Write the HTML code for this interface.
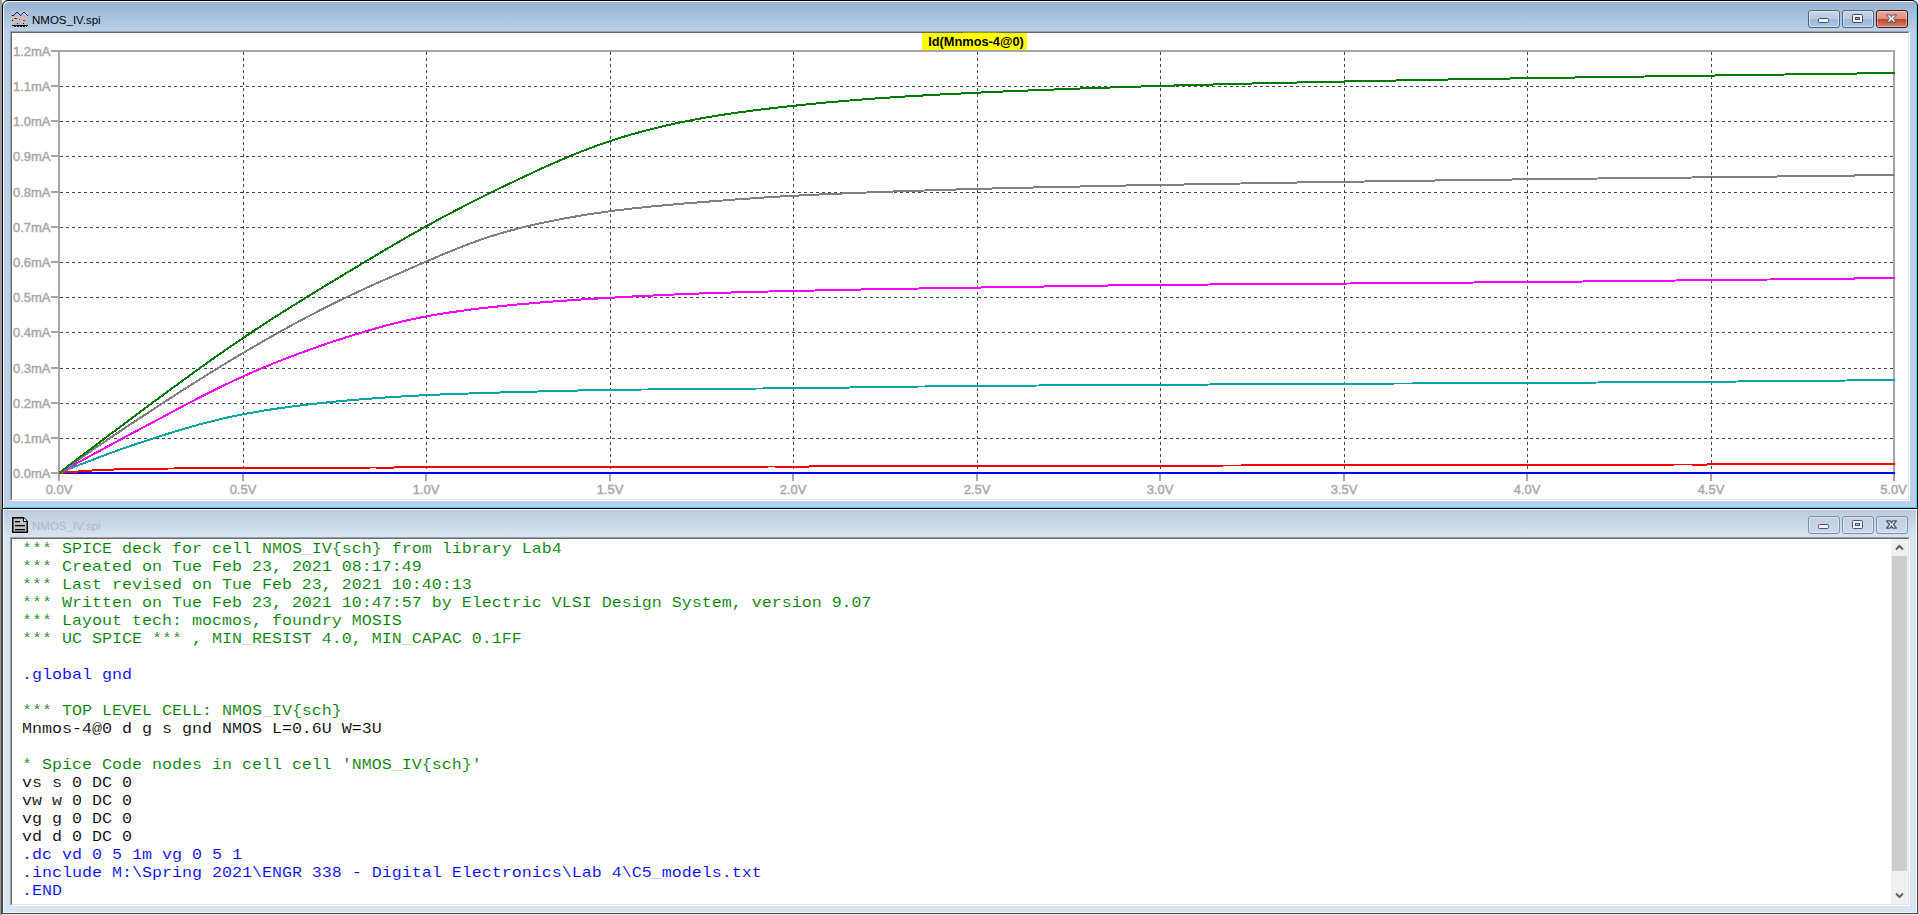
<!DOCTYPE html>
<html lang="en">
<head>
<meta charset="utf-8">
<title>NMOS_IV.spi</title>
<style>
html,body{margin:0;padding:0}
body{width:1918px;height:915px;overflow:hidden;position:relative;background:#f0f0f0;font-family:"Liberation Sans",sans-serif}
.abs{position:absolute}
#edgeL{left:0;top:0;width:2px;height:915px;background:#9a9a9a}
#edgeL2{left:1px;top:509px;width:2px;height:405px;background:#4a4a4a}
/* window 1 (active) */
#w1{left:2px;top:0;width:1914px;height:507px;border:1px solid #000;border-radius:6px 6px 0 0;
 background:linear-gradient(#9ab5d3 0,#9fb9d6 8px,#b9d1ea 30px,#b9d1ea 100%);
 box-shadow:inset 1px 1px 0 #f4f8fc,inset -1px -1px 0 #3fd5f5}
#c1{left:10px;top:31px;width:1898px;height:468px;border:1px solid;border-color:#a0a0a0 #fff #fff #a0a0a0}
#c1 i,#c2 i{display:block;box-sizing:border-box;width:100%;height:100%;background:#fff;border:1px solid;border-color:#696969 #e3e3e3 #e3e3e3 #696969}
/* window 2 (inactive) */
#w2{left:2px;top:509px;width:1914px;height:404px;border:1px solid #474747;border-top:0;
 background:linear-gradient(#bccbdc 0,#c6d4e4 12px,#d7e4f2 28px,#d7e4f2 100%);
 box-shadow:inset 1px 1px 0 #eef4fb,inset -1px -1px 0 #f2f7fc}
#c2{left:10px;top:537px;width:1898px;height:367px;border:1px solid;border-color:#a0a0a0 #fff #fff #a0a0a0}
.title{font-size:11.5px;line-height:16px;white-space:nowrap;left:32px}
#t1{top:12px;color:#000}
#t2{top:518px;color:#b1b4be}
/* caption buttons */
.btn{width:30px;height:16px;border:1px solid #56617a;border-radius:3px;box-shadow:inset 0 0 0 1px rgba(255,255,255,.45);
 background:linear-gradient(#c3d4e9 0,#b7cbe4 47%,#9db7d6 50%,#aac4e2 100%)}
.btn.close{border-color:#431422;background:linear-gradient(#e9ab9d 0,#dd8f7d 47%,#bd4424 50%,#d3836c 100%);box-shadow:inset 0 0 0 1px rgba(255,230,225,.5)}
.btn.in{border-color:#7f8dab;background:linear-gradient(#c1cfe2 0,#ccd9ea 100%);box-shadow:inset 0 0 0 1px rgba(235,242,250,.6)}
.btn svg{position:absolute;left:0;top:0}
/* plot */
#plot{left:0;top:0}
#plot .g{stroke:#484848;stroke-width:1;stroke-dasharray:3 3;shape-rendering:crispEdges}
#plot .c{fill:none;stroke-width:2;stroke-linejoin:round;shape-rendering:crispEdges}
#plot .t{font-family:"Liberation Sans",sans-serif;font-size:13px;fill:#a6a6a6;stroke:#a6a6a6;stroke-width:.4px}
#lab{left:922px;top:33px;width:105px;height:17px;background:#ffff00;color:#000;font-weight:bold;font-size:12.8px;line-height:18px;text-align:center;white-space:nowrap;padding-left:3px;box-sizing:border-box}
#labtop{left:963px;top:32px;width:36px;height:1px;background:#9a9a00}
/* code */
#code{left:22px;top:540px;font-family:"Liberation Mono",monospace;font-size:16.67px;line-height:18px;color:#000}
#code .l{height:18px;white-space:pre;transform:scaleY(.9);transform-origin:0 13.5px;-webkit-text-stroke:.12px #fff}
#code .g{color:#008000}
#code .b{color:#0000ff}
#code .k{color:#000}
/* scrollbar */
#sb{left:1891px;top:539px;width:17px;height:365px;background:#f0f0f0}
#thumb{left:1892px;top:556px;width:15px;height:315px;background:#cdcdcd}
</style>
</head>
<body>
<div class="abs" id="edgeL"></div>
<div class="abs" id="w1"></div>
<div class="abs" id="c1"><i></i></div>
<div class="abs" id="w2"></div>
<div class="abs" id="edgeL2"></div>
<div class="abs" id="c2"><i></i></div>

<!-- window 1 title -->
<svg class="abs" style="left:12px;top:11px" width="16" height="16" viewBox="0 0 16 16" shape-rendering="crispEdges">
<rect width="16" height="16" fill="#c0c0c0"/>
<path d="M1,4h1v1h-1zM2,3h1v1h-1zM3,2h1v1h-1zM4,1h1v1h-1zM5,1h1v1h-1zM6,2h1v1h-1zM7,3h1v1h-1zM8,4h1v1h-1zM9,3h1v1h-1zM10,2h1v1h-1zM11,1h1v1h-1zM12,1h1v1h-1zM13,2h1v1h-1zM14,3h1v1h-1zM15,4h1v1h-1z" fill="#0000ff"/>
<rect x="0" y="4" width="1" height="1" fill="#000"/><rect x="0" y="9" width="1" height="1" fill="#000"/>
<rect x="2" y="7" width="3" height="1" fill="#ff0000"/><rect x="7" y="8" width="1" height="1" fill="#ff0000"/><rect x="11" y="9" width="2" height="1" fill="#ff0000"/>
<rect x="5" y="12" width="1" height="1" fill="#0000c0"/><rect x="11" y="12" width="1" height="1" fill="#0000c0"/>
<rect x="0" y="14" width="16" height="1" fill="#000"/>
<rect x="2" y="15" width="2" height="1" fill="#000"/><rect x="5" y="15" width="2" height="1" fill="#000"/><rect x="8" y="15" width="2" height="1" fill="#000"/><rect x="11" y="15" width="2" height="1" fill="#000"/><rect x="14" y="15" width="1" height="1" fill="#000"/>
</svg>
<div class="abs title" id="t1">NMOS_IV.spi</div>
<div class="abs btn" style="left:1808px;top:10px"><svg width="30" height="16"><rect x="9.5" y="7.5" width="10" height="4" rx="1" fill="#f2f2f2" stroke="#3c4a66"/></svg></div>
<div class="abs btn" style="left:1842px;top:10px"><svg width="30" height="16"><rect x="9.5" y="3.5" width="10" height="8" rx="1" fill="#f6f6f6" stroke="#3c4a66"/><rect x="12.5" y="6.5" width="4" height="2" fill="#8eaace" stroke="#3c4a66"/></svg></div>
<div class="abs btn close" style="left:1876px;top:10px"><svg width="30" height="16"><path d="M9.50,3.90L13.40,3.90L14.50,6.20L15.60,3.90L19.50,3.90L16.45,7.50L19.50,11.10L15.60,11.10L14.50,8.80L13.40,11.10L9.50,11.10L12.55,7.50Z" fill="#fbfbfb" stroke="#4a4f68" stroke-width="1" stroke-linejoin="round"/></svg></div>

<!-- plot -->
<svg class="abs" id="plot" width="1918" height="509" viewBox="0 0 1918 509">
<line x1="60" y1="438.5" x2="1893" y2="438.5" class="g"/>
<line x1="60" y1="403.5" x2="1893" y2="403.5" class="g"/>
<line x1="60" y1="368.5" x2="1893" y2="368.5" class="g"/>
<line x1="60" y1="332.5" x2="1893" y2="332.5" class="g"/>
<line x1="60" y1="297.5" x2="1893" y2="297.5" class="g"/>
<line x1="60" y1="262.5" x2="1893" y2="262.5" class="g"/>
<line x1="60" y1="227.5" x2="1893" y2="227.5" class="g"/>
<line x1="60" y1="192.5" x2="1893" y2="192.5" class="g"/>
<line x1="60" y1="156.5" x2="1893" y2="156.5" class="g"/>
<line x1="60" y1="121.5" x2="1893" y2="121.5" class="g"/>
<line x1="60" y1="86.5" x2="1893" y2="86.5" class="g"/>
<line x1="243.5" y1="52" x2="243.5" y2="473" class="g"/>
<line x1="426.5" y1="52" x2="426.5" y2="473" class="g"/>
<line x1="610.5" y1="52" x2="610.5" y2="473" class="g"/>
<line x1="793.5" y1="52" x2="793.5" y2="473" class="g"/>
<line x1="977.5" y1="52" x2="977.5" y2="473" class="g"/>
<line x1="1160.5" y1="52" x2="1160.5" y2="473" class="g"/>
<line x1="1344.5" y1="52" x2="1344.5" y2="473" class="g"/>
<line x1="1527.5" y1="52" x2="1527.5" y2="473" class="g"/>
<line x1="1711.5" y1="52" x2="1711.5" y2="473" class="g"/>
<rect x="51" y="50" width="1844" height="2" fill="#a6a6a6"/>
<rect x="58" y="50" width="2" height="431" fill="#a6a6a6"/>
<rect x="1893" y="50" width="2" height="431" fill="#a6a6a6"/>
<rect x="51" y="472" width="1844" height="2" fill="#a6a6a6"/>
<rect x="51" y="472" width="8" height="2" fill="#a6a6a6"/>
<rect x="51" y="437" width="8" height="2" fill="#a6a6a6"/>
<rect x="51" y="402" width="8" height="2" fill="#a6a6a6"/>
<rect x="51" y="367" width="8" height="2" fill="#a6a6a6"/>
<rect x="51" y="331" width="8" height="2" fill="#a6a6a6"/>
<rect x="51" y="296" width="8" height="2" fill="#a6a6a6"/>
<rect x="51" y="261" width="8" height="2" fill="#a6a6a6"/>
<rect x="51" y="226" width="8" height="2" fill="#a6a6a6"/>
<rect x="51" y="191" width="8" height="2" fill="#a6a6a6"/>
<rect x="51" y="155" width="8" height="2" fill="#a6a6a6"/>
<rect x="51" y="120" width="8" height="2" fill="#a6a6a6"/>
<rect x="51" y="85" width="8" height="2" fill="#a6a6a6"/>
<rect x="51" y="50" width="8" height="2" fill="#a6a6a6"/>
<rect x="58" y="473" width="2" height="8" fill="#a6a6a6"/>
<rect x="242" y="473" width="2" height="8" fill="#a6a6a6"/>
<rect x="425" y="473" width="2" height="8" fill="#a6a6a6"/>
<rect x="609" y="473" width="2" height="8" fill="#a6a6a6"/>
<rect x="792" y="473" width="2" height="8" fill="#a6a6a6"/>
<rect x="976" y="473" width="2" height="8" fill="#a6a6a6"/>
<rect x="1159" y="473" width="2" height="8" fill="#a6a6a6"/>
<rect x="1343" y="473" width="2" height="8" fill="#a6a6a6"/>
<rect x="1526" y="473" width="2" height="8" fill="#a6a6a6"/>
<rect x="1710" y="473" width="2" height="8" fill="#a6a6a6"/>
<rect x="1893" y="473" width="2" height="8" fill="#a6a6a6"/>
<path d="M59.0,473.0L1895.0,473.0" stroke="#0000ff" class="c"/>
<path d="M59.0,473.0L64.8,472.5L70.5,472.1L76.3,471.6L82.1,471.2L87.9,470.8L93.6,470.4L99.4,470.1L105.2,469.8L110.9,469.6L116.7,469.4L122.5,469.3L128.2,469.2L134.0,469.0L139.8,468.9L145.6,468.8L151.3,468.7L157.1,468.7L162.9,468.6L168.6,468.5L174.4,468.5L180.2,468.4L185.9,468.4L191.7,468.3L197.5,468.3L203.3,468.3L209.0,468.2L214.8,468.2L220.6,468.2L226.3,468.1L232.1,468.1L237.9,468.1L243.7,468.0L249.4,468.0L255.2,468.0L261.0,467.9L266.7,467.9L272.5,467.9L278.3,467.9L284.0,467.8L289.8,467.8L295.6,467.8L301.4,467.8L307.1,467.7L312.9,467.7L318.7,467.7L324.4,467.7L330.2,467.7L336.0,467.6L341.8,467.6L347.5,467.6L353.3,467.6L359.1,467.6L364.8,467.6L370.6,467.5L376.4,467.5L382.1,467.5L387.9,467.5L393.7,467.5L399.5,467.4L405.2,467.4L411.0,467.4L416.8,467.4L422.5,467.4L428.3,467.3L434.1,467.3L439.8,467.3L445.6,467.3L451.4,467.3L457.2,467.3L462.9,467.2L468.7,467.2L474.5,467.2L480.2,467.2L486.0,467.2L491.8,467.2L497.6,467.2L503.3,467.1L509.1,467.1L514.9,467.1L520.6,467.1L526.4,467.1L532.2,467.1L537.9,467.1L543.7,467.0L549.5,467.0L555.3,467.0L561.0,467.0L566.8,467.0L572.6,467.0L578.3,467.0L584.1,466.9L589.9,466.9L595.7,466.9L601.4,466.9L607.2,466.9L613.0,466.9L618.7,466.9L624.5,466.9L630.3,466.8L636.0,466.8L641.8,466.8L647.6,466.8L653.4,466.8L659.1,466.8L664.9,466.8L670.7,466.8L676.4,466.7L682.2,466.7L688.0,466.7L693.7,466.7L699.5,466.7L705.3,466.7L711.1,466.7L716.8,466.7L722.6,466.6L728.4,466.6L734.1,466.6L739.9,466.6L745.7,466.6L751.5,466.6L757.2,466.6L763.0,466.6L768.8,466.5L774.5,466.5L780.3,466.5L786.1,466.5L791.8,466.5L797.6,466.5L803.4,466.5L809.2,466.5L814.9,466.4L820.7,466.4L826.5,466.4L832.2,466.4L838.0,466.4L843.8,466.4L849.6,466.4L855.3,466.3L861.1,466.3L866.9,466.3L872.6,466.3L878.4,466.3L884.2,466.3L889.9,466.3L895.7,466.3L901.5,466.2L907.3,466.2L913.0,466.2L918.8,466.2L924.6,466.2L930.3,466.2L936.1,466.2L941.9,466.1L947.6,466.1L953.4,466.1L959.2,466.1L965.0,466.1L970.7,466.1L976.5,466.1L992.1,466.0L1007.6,466.0L1023.2,466.0L1038.7,465.9L1054.3,465.9L1069.8,465.9L1085.4,465.8L1100.9,465.8L1116.5,465.8L1132.0,465.7L1147.6,465.7L1163.1,465.7L1178.7,465.6L1194.2,465.6L1209.8,465.6L1225.3,465.5L1240.9,465.5L1256.4,465.4L1272.0,465.4L1287.5,465.4L1303.1,465.3L1318.6,465.3L1334.2,465.3L1349.7,465.2L1365.3,465.2L1380.8,465.2L1396.4,465.1L1411.9,465.1L1427.5,465.1L1443.0,465.0L1458.6,465.0L1474.1,465.0L1489.7,464.9L1505.2,464.9L1520.8,464.9L1536.3,464.8L1551.9,464.8L1567.4,464.8L1583.0,464.7L1598.5,464.7L1614.1,464.7L1629.6,464.6L1645.2,464.6L1660.7,464.6L1676.3,464.5L1691.8,464.5L1707.4,464.5L1722.9,464.4L1738.5,464.4L1754.0,464.4L1769.6,464.3L1785.1,464.3L1800.7,464.3L1816.2,464.2L1831.8,464.2L1847.3,464.2L1862.9,464.2L1878.4,464.1L1894.0,464.1L1895.0,464.1" stroke="#ff0000" class="c"/>
<path d="M59.0,473.0L64.8,470.7L70.5,468.4L76.3,466.1L82.1,463.8L87.9,461.6L93.6,459.4L99.4,457.2L105.2,455.0L110.9,452.9L116.7,450.8L122.5,448.7L128.2,446.7L134.0,444.7L139.8,442.8L145.6,440.9L151.3,439.0L157.1,437.1L162.9,435.3L168.6,433.5L174.4,431.7L180.2,430.0L185.9,428.3L191.7,426.7L197.5,425.0L203.3,423.5L209.0,422.0L214.8,420.5L220.6,419.1L226.3,417.8L232.1,416.5L237.9,415.3L243.7,414.2L249.4,413.1L255.2,412.1L261.0,411.1L266.7,410.1L272.5,409.2L278.3,408.4L284.0,407.6L289.8,406.8L295.6,406.0L301.4,405.3L307.1,404.6L312.9,403.9L318.7,403.3L324.4,402.7L330.2,402.1L336.0,401.5L341.8,401.0L347.5,400.5L353.3,400.0L359.1,399.5L364.8,399.0L370.6,398.6L376.4,398.1L382.1,397.7L387.9,397.3L393.7,397.0L399.5,396.6L405.2,396.3L411.0,395.9L416.8,395.6L422.5,395.3L428.3,395.0L434.1,394.8L439.8,394.5L445.6,394.3L451.4,394.1L457.2,393.9L462.9,393.7L468.7,393.5L474.5,393.3L480.2,393.1L486.0,392.9L491.8,392.7L497.6,392.6L503.3,392.4L509.1,392.3L514.9,392.1L520.6,391.9L526.4,391.8L532.2,391.6L537.9,391.5L543.7,391.3L549.5,391.2L555.3,391.0L561.0,390.9L566.8,390.8L572.6,390.6L578.3,390.5L584.1,390.4L589.9,390.3L595.7,390.2L601.4,390.1L607.2,390.0L613.0,389.9L618.7,389.8L624.5,389.7L630.3,389.7L636.0,389.6L641.8,389.5L647.6,389.5L653.4,389.4L659.1,389.4L664.9,389.3L670.7,389.2L676.4,389.2L682.2,389.1L688.0,389.1L693.7,389.0L699.5,389.0L705.3,388.9L711.1,388.9L716.8,388.9L722.6,388.8L728.4,388.8L734.1,388.7L739.9,388.7L745.7,388.6L751.5,388.6L757.2,388.5L763.0,388.5L768.8,388.4L774.5,388.4L780.3,388.3L786.1,388.2L791.8,388.2L797.6,388.1L803.4,388.1L809.2,388.0L814.9,387.9L820.7,387.9L826.5,387.8L832.2,387.7L838.0,387.6L843.8,387.6L849.6,387.5L855.3,387.4L861.1,387.3L866.9,387.2L872.6,387.2L878.4,387.1L884.2,387.0L889.9,386.9L895.7,386.8L901.5,386.8L907.3,386.7L913.0,386.6L918.8,386.5L924.6,386.5L930.3,386.4L936.1,386.3L941.9,386.3L947.6,386.2L953.4,386.1L959.2,386.1L965.0,386.0L970.7,386.0L976.5,385.9L992.1,385.8L1007.6,385.7L1023.2,385.6L1038.7,385.5L1054.3,385.4L1069.8,385.3L1085.4,385.2L1100.9,385.1L1116.5,385.0L1132.0,385.0L1147.6,384.9L1163.1,384.8L1178.7,384.7L1194.2,384.6L1209.8,384.5L1225.3,384.4L1240.9,384.3L1256.4,384.3L1272.0,384.2L1287.5,384.1L1303.1,384.0L1318.6,383.9L1334.2,383.9L1349.7,383.8L1365.3,383.7L1380.8,383.6L1396.4,383.5L1411.9,383.5L1427.5,383.4L1443.0,383.3L1458.6,383.2L1474.1,383.2L1489.7,383.1L1505.2,383.0L1520.8,382.9L1536.3,382.8L1551.9,382.8L1567.4,382.7L1583.0,382.6L1598.5,382.5L1614.1,382.4L1629.6,382.3L1645.2,382.2L1660.7,382.1L1676.3,381.9L1691.8,381.8L1707.4,381.7L1722.9,381.6L1738.5,381.5L1754.0,381.3L1769.6,381.2L1785.1,381.1L1800.7,380.9L1816.2,380.8L1831.8,380.6L1847.3,380.5L1862.9,380.3L1878.4,380.2L1894.0,380.0L1895.0,380.0" stroke="#00a6a6" class="c"/>
<path d="M59.0,473.0L64.8,469.8L70.5,466.7L76.3,463.5L82.1,460.4L87.9,457.2L93.6,454.1L99.4,451.0L105.2,447.8L110.9,444.7L116.7,441.6L122.5,438.5L128.2,435.4L134.0,432.3L139.8,429.2L145.6,426.1L151.3,423.1L157.1,420.0L162.9,416.9L168.6,413.8L174.4,410.7L180.2,407.7L185.9,404.6L191.7,401.6L197.5,398.6L203.3,395.6L209.0,392.7L214.8,389.8L220.6,387.0L226.3,384.2L232.1,381.5L237.9,378.8L243.7,376.2L249.4,373.6L255.2,371.1L261.0,368.6L266.7,366.2L272.5,363.8L278.3,361.5L284.0,359.2L289.8,357.0L295.6,354.8L301.4,352.7L307.1,350.6L312.9,348.5L318.7,346.5L324.4,344.5L330.2,342.5L336.0,340.6L341.8,338.8L347.5,336.9L353.3,335.1L359.1,333.3L364.8,331.6L370.6,329.9L376.4,328.2L382.1,326.6L387.9,325.1L393.7,323.6L399.5,322.2L405.2,320.8L411.0,319.5L416.8,318.3L422.5,317.1L428.3,316.0L434.1,315.0L439.8,314.0L445.6,313.1L451.4,312.2L457.2,311.4L462.9,310.6L468.7,309.8L474.5,309.1L480.2,308.4L486.0,307.7L491.8,307.1L497.6,306.5L503.3,305.9L509.1,305.3L514.9,304.7L520.6,304.2L526.4,303.7L532.2,303.2L537.9,302.7L543.7,302.2L549.5,301.8L555.3,301.3L561.0,300.9L566.8,300.5L572.6,300.1L578.3,299.7L584.1,299.3L589.9,299.0L595.7,298.6L601.4,298.3L607.2,297.9L613.0,297.6L618.7,297.3L624.5,296.9L630.3,296.6L636.0,296.3L641.8,296.0L647.6,295.7L653.4,295.5L659.1,295.2L664.9,294.9L670.7,294.7L676.4,294.4L682.2,294.2L688.0,294.0L693.7,293.8L699.5,293.5L705.3,293.3L711.1,293.1L716.8,293.0L722.6,292.8L728.4,292.6L734.1,292.4L739.9,292.3L745.7,292.1L751.5,291.9L757.2,291.8L763.0,291.6L768.8,291.5L774.5,291.4L780.3,291.2L786.1,291.1L791.8,291.0L797.6,290.8L803.4,290.7L809.2,290.6L814.9,290.5L820.7,290.3L826.5,290.2L832.2,290.1L838.0,290.0L843.8,289.9L849.6,289.8L855.3,289.7L861.1,289.5L866.9,289.4L872.6,289.3L878.4,289.2L884.2,289.1L889.9,289.0L895.7,288.9L901.5,288.8L907.3,288.7L913.0,288.6L918.8,288.5L924.6,288.4L930.3,288.4L936.1,288.3L941.9,288.2L947.6,288.1L953.4,288.0L959.2,287.9L965.0,287.8L970.7,287.7L976.5,287.6L992.1,287.3L1007.6,287.1L1023.2,286.8L1038.7,286.6L1054.3,286.3L1069.8,286.1L1085.4,285.9L1100.9,285.6L1116.5,285.4L1132.0,285.2L1147.6,285.1L1163.1,284.9L1178.7,284.7L1194.2,284.6L1209.8,284.5L1225.3,284.3L1240.9,284.2L1256.4,284.1L1272.0,284.0L1287.5,283.9L1303.1,283.8L1318.6,283.7L1334.2,283.6L1349.7,283.5L1365.3,283.3L1380.8,283.2L1396.4,283.1L1411.9,283.0L1427.5,282.9L1443.0,282.8L1458.6,282.7L1474.1,282.5L1489.7,282.4L1505.2,282.3L1520.8,282.1L1536.3,282.0L1551.9,281.9L1567.4,281.7L1583.0,281.5L1598.5,281.4L1614.1,281.2L1629.6,281.0L1645.2,280.8L1660.7,280.7L1676.3,280.5L1691.8,280.3L1707.4,280.1L1722.9,280.0L1738.5,279.8L1754.0,279.6L1769.6,279.5L1785.1,279.3L1800.7,279.1L1816.2,278.9L1831.8,278.8L1847.3,278.6L1862.9,278.4L1878.4,278.3L1894.0,278.1L1895.0,278.1" stroke="#ff00ff" class="c"/>
<path d="M59.0,473.0L64.8,469.0L70.5,465.0L76.3,461.0L82.1,457.1L87.9,453.1L93.6,449.2L99.4,445.2L105.2,441.3L110.9,437.4L116.7,433.5L122.5,429.7L128.2,425.8L134.0,422.0L139.8,418.1L145.6,414.3L151.3,410.6L157.1,406.8L162.9,403.0L168.6,399.3L174.4,395.5L180.2,391.8L185.9,388.1L191.7,384.5L197.5,380.8L203.3,377.2L209.0,373.6L214.8,370.0L220.6,366.5L226.3,363.0L232.1,359.5L237.9,356.0L243.7,352.6L249.4,349.2L255.2,345.9L261.0,342.5L266.7,339.2L272.5,336.0L278.3,332.7L284.0,329.5L289.8,326.3L295.6,323.2L301.4,320.1L307.1,317.0L312.9,314.0L318.7,311.0L324.4,308.1L330.2,305.2L336.0,302.3L341.8,299.5L347.5,296.7L353.3,294.0L359.1,291.3L364.8,288.6L370.6,286.0L376.4,283.4L382.1,280.8L387.9,278.3L393.7,275.7L399.5,273.2L405.2,270.7L411.0,268.2L416.8,265.6L422.5,263.1L428.3,260.6L434.1,258.2L439.8,255.7L445.6,253.3L451.4,250.9L457.2,248.5L462.9,246.3L468.7,244.0L474.5,241.9L480.2,239.9L486.0,237.9L491.8,236.0L497.6,234.3L503.3,232.6L509.1,230.9L514.9,229.4L520.6,227.9L526.4,226.5L532.2,225.1L537.9,223.8L543.7,222.6L549.5,221.4L555.3,220.2L561.0,219.1L566.8,218.0L572.6,217.0L578.3,216.0L584.1,215.0L589.9,214.1L595.7,213.2L601.4,212.4L607.2,211.6L613.0,210.8L618.7,210.1L624.5,209.4L630.3,208.7L636.0,208.1L641.8,207.5L647.6,206.9L653.4,206.3L659.1,205.8L664.9,205.3L670.7,204.7L676.4,204.2L682.2,203.7L688.0,203.2L693.7,202.8L699.5,202.3L705.3,201.8L711.1,201.4L716.8,200.9L722.6,200.5L728.4,200.0L734.1,199.6L739.9,199.2L745.7,198.8L751.5,198.4L757.2,198.0L763.0,197.6L768.8,197.2L774.5,196.9L780.3,196.5L786.1,196.2L791.8,195.9L797.6,195.6L803.4,195.3L809.2,195.0L814.9,194.7L820.7,194.4L826.5,194.2L832.2,193.9L838.0,193.7L843.8,193.4L849.6,193.2L855.3,192.9L861.1,192.7L866.9,192.5L872.6,192.3L878.4,192.1L884.2,191.8L889.9,191.6L895.7,191.4L901.5,191.2L907.3,191.0L913.0,190.8L918.8,190.6L924.6,190.5L930.3,190.3L936.1,190.1L941.9,189.9L947.6,189.8L953.4,189.6L959.2,189.4L965.0,189.2L970.7,189.1L976.5,188.9L992.1,188.5L1007.6,188.1L1023.2,187.7L1038.7,187.4L1054.3,187.0L1069.8,186.7L1085.4,186.4L1100.9,186.0L1116.5,185.7L1132.0,185.4L1147.6,185.1L1163.1,184.8L1178.7,184.6L1194.2,184.3L1209.8,184.0L1225.3,183.7L1240.9,183.5L1256.4,183.2L1272.0,182.9L1287.5,182.7L1303.1,182.4L1318.6,182.2L1334.2,181.9L1349.7,181.7L1365.3,181.5L1380.8,181.3L1396.4,181.0L1411.9,180.8L1427.5,180.6L1443.0,180.4L1458.6,180.2L1474.1,180.0L1489.7,179.8L1505.2,179.6L1520.8,179.4L1536.3,179.2L1551.9,179.0L1567.4,178.8L1583.0,178.7L1598.5,178.5L1614.1,178.3L1629.6,178.2L1645.2,178.0L1660.7,177.8L1676.3,177.7L1691.8,177.5L1707.4,177.3L1722.9,177.1L1738.5,177.0L1754.0,176.8L1769.6,176.6L1785.1,176.4L1800.7,176.2L1816.2,176.0L1831.8,175.8L1847.3,175.6L1862.9,175.4L1878.4,175.2L1894.0,175.0L1895.0,175.0" stroke="#808080" class="c"/>
<path d="M59.0,473.0L64.8,468.6L70.5,464.2L76.3,459.8L82.1,455.5L87.9,451.1L93.6,446.7L99.4,442.4L105.2,438.0L110.9,433.7L116.7,429.4L122.5,425.1L128.2,420.8L134.0,416.5L139.8,412.2L145.6,407.9L151.3,403.6L157.1,399.4L162.9,395.1L168.6,390.8L174.4,386.6L180.2,382.4L185.9,378.2L191.7,374.0L197.5,369.8L203.3,365.7L209.0,361.5L214.8,357.4L220.6,353.4L226.3,349.4L232.1,345.4L237.9,341.5L243.7,337.6L249.4,333.7L255.2,329.9L261.0,326.1L266.7,322.3L272.5,318.6L278.3,314.9L284.0,311.3L289.8,307.7L295.6,304.0L301.4,300.5L307.1,296.9L312.9,293.4L318.7,289.8L324.4,286.3L330.2,282.8L336.0,279.3L341.8,275.8L347.5,272.3L353.3,268.9L359.1,265.4L364.8,261.9L370.6,258.5L376.4,255.1L382.1,251.6L387.9,248.2L393.7,244.8L399.5,241.5L405.2,238.1L411.0,234.8L416.8,231.6L422.5,228.3L428.3,225.1L434.1,222.0L439.8,218.8L445.6,215.7L451.4,212.7L457.2,209.7L462.9,206.7L468.7,203.7L474.5,200.8L480.2,197.9L486.0,195.0L491.8,192.1L497.6,189.3L503.3,186.5L509.1,183.8L514.9,181.0L520.6,178.3L526.4,175.6L532.2,172.9L537.9,170.2L543.7,167.6L549.5,165.0L555.3,162.4L561.0,159.9L566.8,157.5L572.6,155.0L578.3,152.7L584.1,150.4L589.9,148.2L595.7,146.1L601.4,144.0L607.2,142.0L613.0,140.1L618.7,138.3L624.5,136.5L630.3,134.8L636.0,133.2L641.8,131.6L647.6,130.1L653.4,128.6L659.1,127.2L664.9,125.8L670.7,124.5L676.4,123.2L682.2,122.0L688.0,120.9L693.7,119.7L699.5,118.7L705.3,117.6L711.1,116.6L716.8,115.7L722.6,114.8L728.4,113.9L734.1,113.1L739.9,112.3L745.7,111.5L751.5,110.7L757.2,110.0L763.0,109.3L768.8,108.6L774.5,107.9L780.3,107.2L786.1,106.6L791.8,106.0L797.6,105.4L803.4,104.8L809.2,104.2L814.9,103.6L820.7,103.1L826.5,102.5L832.2,102.0L838.0,101.5L843.8,101.0L849.6,100.5L855.3,100.0L861.1,99.6L866.9,99.1L872.6,98.7L878.4,98.3L884.2,97.9L889.9,97.5L895.7,97.1L901.5,96.7L907.3,96.4L913.0,96.0L918.8,95.7L924.6,95.4L930.3,95.1L936.1,94.7L941.9,94.4L947.6,94.1L953.4,93.9L959.2,93.6L965.0,93.3L970.7,93.0L976.5,92.7L992.1,92.0L1007.6,91.3L1023.2,90.7L1038.7,90.1L1054.3,89.5L1069.8,88.9L1085.4,88.3L1100.9,87.8L1116.5,87.3L1132.0,86.8L1147.6,86.3L1163.1,85.8L1178.7,85.4L1194.2,85.0L1209.8,84.6L1225.3,84.2L1240.9,83.8L1256.4,83.4L1272.0,83.1L1287.5,82.7L1303.1,82.4L1318.6,82.0L1334.2,81.7L1349.7,81.4L1365.3,81.1L1380.8,80.8L1396.4,80.5L1411.9,80.2L1427.5,79.9L1443.0,79.6L1458.6,79.3L1474.1,79.1L1489.7,78.8L1505.2,78.6L1520.8,78.3L1536.3,78.1L1551.9,77.8L1567.4,77.6L1583.0,77.4L1598.5,77.1L1614.1,76.9L1629.6,76.7L1645.2,76.5L1660.7,76.3L1676.3,76.1L1691.8,75.9L1707.4,75.6L1722.9,75.4L1738.5,75.2L1754.0,75.0L1769.6,74.8L1785.1,74.5L1800.7,74.3L1816.2,74.1L1831.8,73.9L1847.3,73.7L1862.9,73.4L1878.4,73.2L1894.0,73.0L1895.0,73.0" stroke="#007d00" class="c"/>
<text x="50.5" y="478" text-anchor="end" class="t">0.0mA</text>
<text x="50.5" y="443" text-anchor="end" class="t">0.1mA</text>
<text x="50.5" y="408" text-anchor="end" class="t">0.2mA</text>
<text x="50.5" y="373" text-anchor="end" class="t">0.3mA</text>
<text x="50.5" y="337" text-anchor="end" class="t">0.4mA</text>
<text x="50.5" y="302" text-anchor="end" class="t">0.5mA</text>
<text x="50.5" y="267" text-anchor="end" class="t">0.6mA</text>
<text x="50.5" y="232" text-anchor="end" class="t">0.7mA</text>
<text x="50.5" y="197" text-anchor="end" class="t">0.8mA</text>
<text x="50.5" y="161" text-anchor="end" class="t">0.9mA</text>
<text x="50.5" y="126" text-anchor="end" class="t">1.0mA</text>
<text x="50.5" y="91" text-anchor="end" class="t">1.1mA</text>
<text x="50.5" y="56" text-anchor="end" class="t">1.2mA</text>
<text x="59" y="494" text-anchor="middle" class="t">0.0V</text>
<text x="243" y="494" text-anchor="middle" class="t">0.5V</text>
<text x="426" y="494" text-anchor="middle" class="t">1.0V</text>
<text x="610" y="494" text-anchor="middle" class="t">1.5V</text>
<text x="793" y="494" text-anchor="middle" class="t">2.0V</text>
<text x="977" y="494" text-anchor="middle" class="t">2.5V</text>
<text x="1160" y="494" text-anchor="middle" class="t">3.0V</text>
<text x="1344" y="494" text-anchor="middle" class="t">3.5V</text>
<text x="1527" y="494" text-anchor="middle" class="t">4.0V</text>
<text x="1711" y="494" text-anchor="middle" class="t">4.5V</text>
<text x="1907" y="494" text-anchor="end" class="t">5.0V</text>
</svg>
<div class="abs" id="labtop"></div>
<div class="abs" id="lab">Id(Mnmos-4@0)</div>

<!-- window 2 title -->
<svg class="abs" style="left:12px;top:517px" width="16" height="16" viewBox="0 0 16 16">
<path d="M0.75,0.75 H11.5 L15.25,4.5 V15.25 H0.75 Z" fill="#c0c0c0" stroke="#000" stroke-width="1.5"/>
<path d="M11.5,0.75 V4.5 H15.25" fill="#fff" stroke="#000" stroke-width="1"/>
<rect x="3" y="4" width="5" height="1.3" fill="#000"/><rect x="3" y="8" width="10" height="1.3" fill="#000"/><rect x="3" y="12" width="10" height="1.3" fill="#000"/>
</svg>
<div class="abs title" id="t2">NMOS_IV.spi</div>
<div class="abs btn in" style="left:1808px;top:516px"><svg width="30" height="16"><rect x="9.5" y="7.5" width="10" height="4" rx="1" fill="#f0f0f0" stroke="#4d566e"/></svg></div>
<div class="abs btn in" style="left:1842px;top:516px"><svg width="30" height="16"><rect x="9.5" y="3.5" width="10" height="8" rx="1" fill="#f4f4f4" stroke="#4d566e"/><rect x="12.5" y="6.5" width="4" height="2" fill="#c3d0e3" stroke="#4d566e"/></svg></div>
<div class="abs btn in" style="left:1876px;top:516px"><svg width="30" height="16"><path d="M9.50,3.90L13.40,3.90L14.50,6.20L15.60,3.90L19.50,3.90L16.45,7.50L19.50,11.10L15.60,11.10L14.50,8.80L13.40,11.10L9.50,11.10L12.55,7.50Z" fill="#f4f4f4" stroke="#4d566e" stroke-width="1.2" stroke-linejoin="round"/></svg></div>

<!-- code -->
<div class="abs" id="code">
<div class="l g">*** SPICE deck for cell NMOS_IV{sch} from library Lab4</div><div class="l g">*** Created on Tue Feb 23, 2021 08:17:49</div><div class="l g">*** Last revised on Tue Feb 23, 2021 10:40:13</div><div class="l g">*** Written on Tue Feb 23, 2021 10:47:57 by Electric VLSI Design System, version 9.07</div><div class="l g">*** Layout tech: mocmos, foundry MOSIS</div><div class="l g">*** UC SPICE *** , MIN_RESIST 4.0, MIN_CAPAC 0.1FF</div><div class="l k">&nbsp;</div><div class="l b">.global gnd</div><div class="l k">&nbsp;</div><div class="l g">*** TOP LEVEL CELL: NMOS_IV{sch}</div><div class="l k">Mnmos-4@0 d g s gnd NMOS L=0.6U W=3U</div><div class="l k">&nbsp;</div><div class="l g">* Spice Code nodes in cell cell 'NMOS_IV{sch}'</div><div class="l k">vs s 0 DC 0</div><div class="l k">vw w 0 DC 0</div><div class="l k">vg g 0 DC 0</div><div class="l k">vd d 0 DC 0</div><div class="l b">.dc vd 0 5 1m vg 0 5 1</div><div class="l b">.include M:\Spring 2021\ENGR 338 - Digital Electronics\Lab 4\C5_models.txt</div><div class="l b">.END</div>
</div>
<div class="abs" id="sb"></div>
<div class="abs" id="thumb"></div>
<svg class="abs" style="left:1891px;top:539px" width="17" height="17"><path d="M5,10.5 L8.5,7 L12,10.5" fill="none" stroke="#606060" stroke-width="2"/></svg>
<svg class="abs" style="left:1891px;top:887px" width="17" height="17"><path d="M5,6.5 L8.5,10 L12,6.5" fill="none" stroke="#606060" stroke-width="2"/></svg>
</body>
</html>
